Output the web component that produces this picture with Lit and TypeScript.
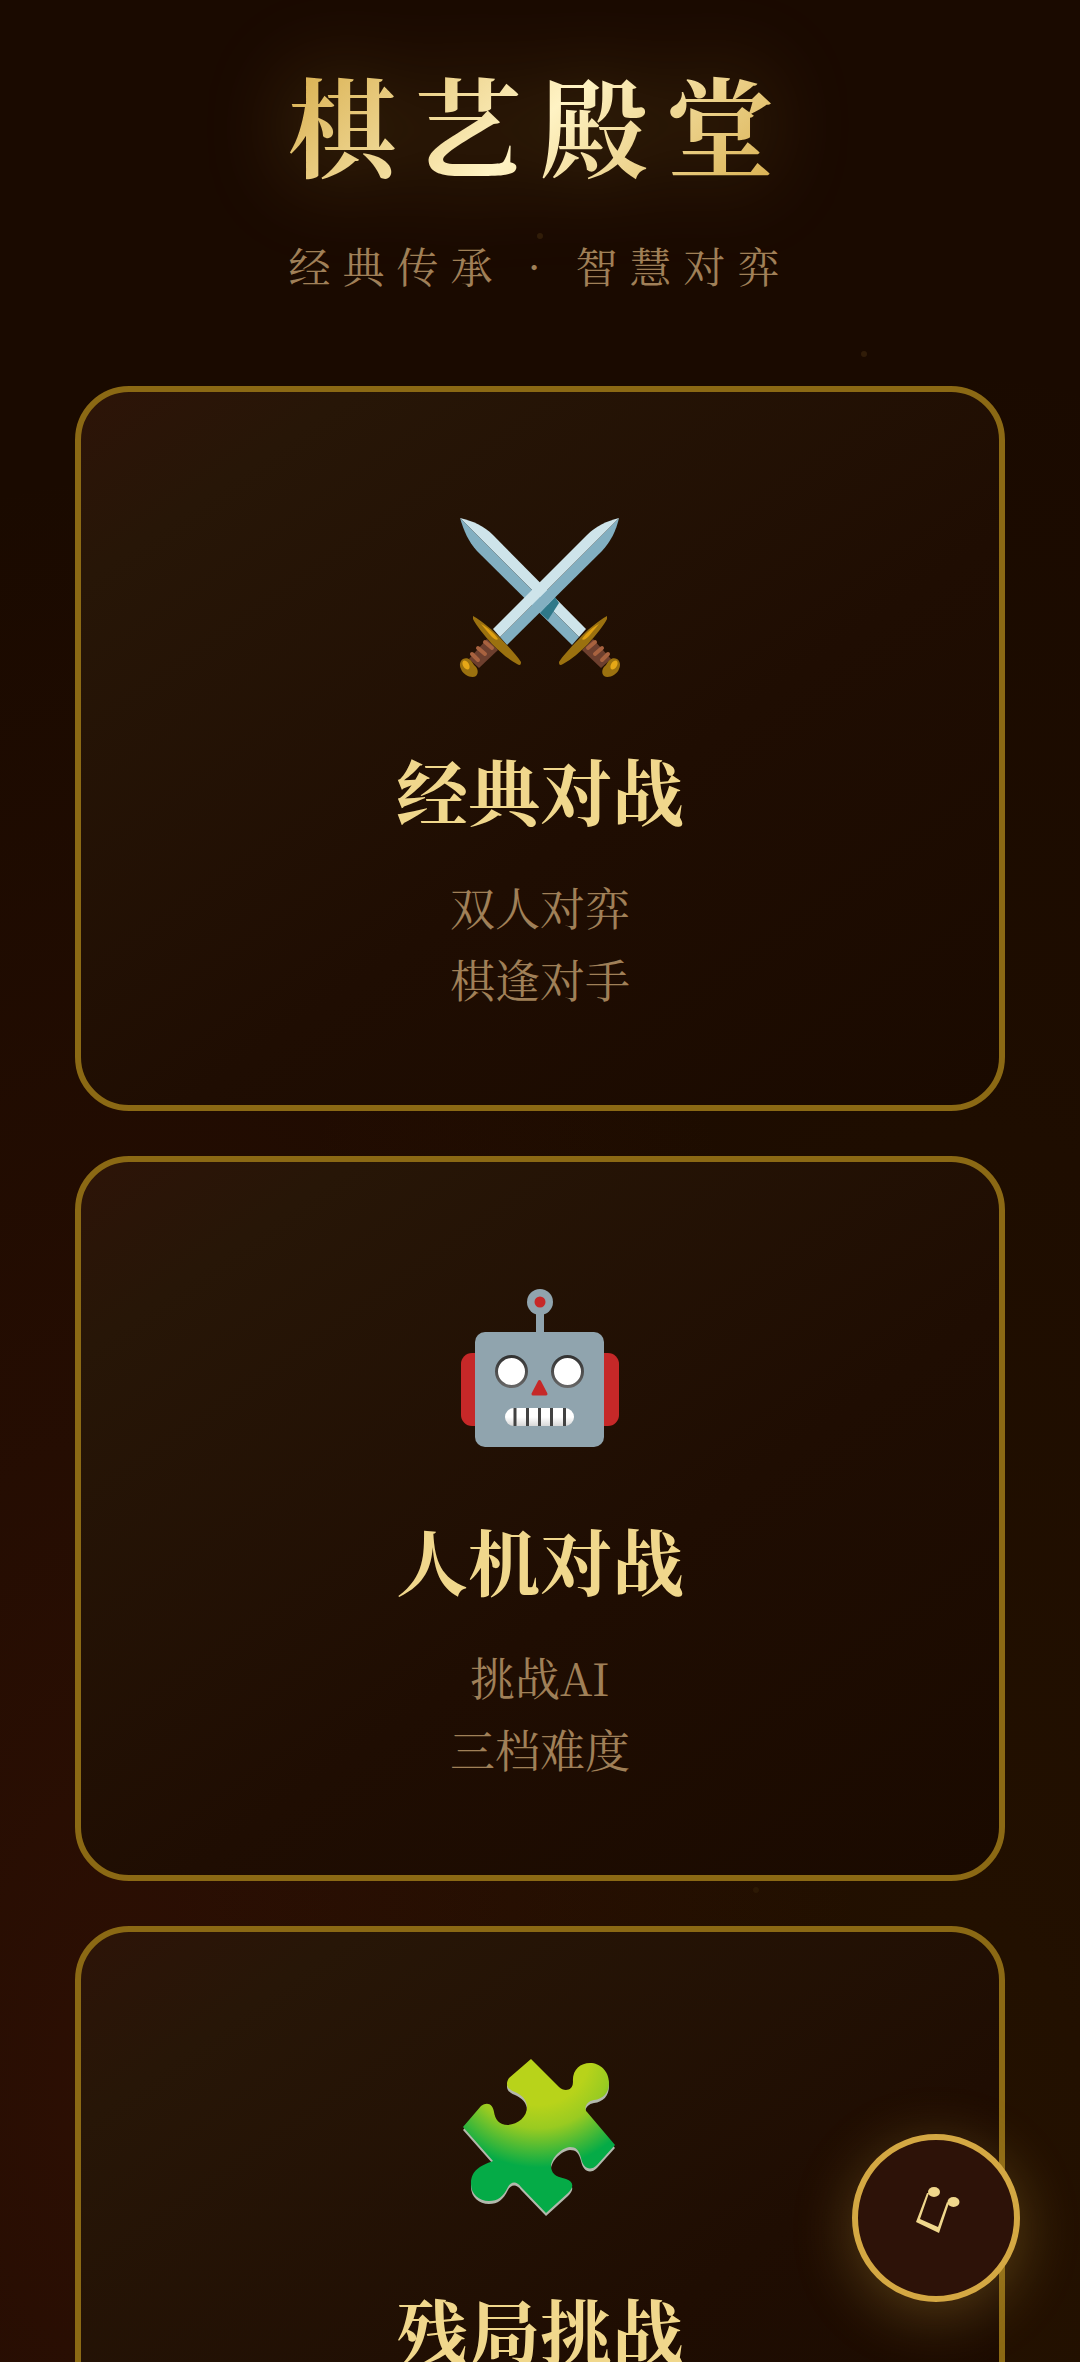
import { LitElement, html, css, svg } from "lit";
import { customElement } from "lit/decorators.js";

const hilt = (flip: boolean) => svg`
  <g transform=${flip ? "translate(160 0) scale(-1 1)" : "translate(0 0)"}>
    <path fill="#6d3f2e" d="M27 121 L38 132 L19 150 L9 141 Z"/>
    <path d="M25 124 l7 6 M18 130 l7 6 M12 136 l6 6" stroke="#a8623f" stroke-width="4" stroke-linecap="round"/>
    <path fill="#9b710f" d="M13 98 C22 103 33 112 42 122 C50 130 58 139 61 144 C61 147 60 148 57 146 C48 141 40 134 32 126 C24 117 16 107 13 101 Z"/>
    <path fill="#e0a010" d="M21 106 C27 109 34 115 38 121 C37 123 34 121 31 118 Z"/>
    <path fill="#9b710f" d="M3 141 C8 139 11 142 14 147 C18 150 19 155 16 158 C12 161 3 157 1 151 C-1 147 0 143 3 141 Z"/>
    <ellipse cx="6" cy="147" rx="3" ry="5" transform="rotate(-30 6 147)" fill="#e6a817"/>
  </g>`;

const swordsIcon = html`
  <svg class="icon" viewBox="0 0 160 160" aria-hidden="true">
    <path fill="#cee4ea" d="M0 0 C13 3 24 8 33 17 L126 111 L119 119 Z"/>
    <path fill="#82afc1" d="M0 0 C4 13 8 23 17 33 L112 127 L119 119 Z"/>
    <path fill="#2f7889" d="M80 95 L95 79 L99 85 L88 102 Z"/>
    <path fill="#82afc1" d="M159 0 C156 13 151 23 142 33 L47 127 L40 119 Z"/>
    <path fill="#cee4ea" d="M159 0 C147 3 136 8 127 17 L33 111 L40 119 Z"/>
    ${hilt(false)}${hilt(true)}
  </svg>`;

const robotIcon = html`
  <svg class="icon" viewBox="0 0 160 160" aria-hidden="true">
    <defs>
      <linearGradient id="teeth" x1="0" y1="0" x2="0" y2="1">
        <stop offset=".5" stop-color="#fff"/><stop offset="1" stop-color="#d8d8d8"/>
      </linearGradient>
      <linearGradient id="rim" x1="0" y1="0" x2="0" y2="1">
        <stop offset="0" stop-color="#333"/><stop offset="1" stop-color="#666"/>
      </linearGradient>
    </defs>
    <rect x="1" y="65" width="158" height="73" rx="11" fill="#c62828"/>
    <rect x="15" y="44" width="129" height="115" rx="10" fill="#90a4ae"/>
    <path d="M76 20h8v26h-8z" fill="#90a4ae"/>
    <circle cx="80" cy="14" r="13" fill="#90a4ae"/>
    <circle cx="80" cy="14" r="5.500" fill="#c62828"/>
    <circle cx="51.500" cy="83.500" r="15" fill="#fff" stroke="url(#rim)" stroke-width="3"/>
    <circle cx="107.500" cy="83.500" r="15" fill="#fff" stroke="url(#rim)" stroke-width="3"/>
    <path d="M79.500 93.500 L86 106 H73Z" fill="#c62828" stroke="#c62828" stroke-width="3" stroke-linejoin="round"/>
    <rect x="45" y="120" width="69" height="18" rx="9" fill="url(#teeth)"/>
    <path d="M55 120v18M67.500 120v18M79.500 120v18M91.500 120v18M104.500 120v18" stroke="#424242" stroke-width="3"/>
  </svg>`;

const piece =
  "M71 1 L99 29 C104 34 113 33 113 24 C112 12 120 5 130 5 C140 5 149 13 149 25 C149 35 143 41 134 42 C127 43 123 50 127 54 L155 87 L137 107 C130 114 123 110 121 100 C119 92 116 89 110 89 C101 90 91 100 91 109 C92 118 99 119 106 121 C114 124 114 129 108 135 L86 155 L61 129 C57 123 51 123 48 129 C43 139 38 143 29 143 C19 143 11 136 11 126 C11 112 20 108 33 103 L3 69 L21 48 C28 43 33 47 34 54 C35 61 39 67 48 67 C58 66 67 59 67 49 C67 42 62 37 55 34 C47 31 45 26 49 20 Z";

const puzzleIcon = html`
  <svg class="icon" viewBox="0 0 160 160" aria-hidden="true">
    <defs>
      <radialGradient id="green" gradientUnits="userSpaceOnUse" cx="78" cy="-5" r="130">
        <stop offset=".4" stop-color="#b8d31a"/>
        <stop offset=".58" stop-color="#99cb21"/>
        <stop offset=".88" stop-color="#05ab47"/>
      </radialGradient>
    </defs>
    <path d=${piece} fill="#b3b8ac" transform="translate(0 3)"/>
    <path d=${piece} fill="url(#green)"/>
  </svg>`;

const modes = [
  { icon: swordsIcon, title: "经典对战", lines: ["双人对弈", "棋逢对手"] },
  { icon: robotIcon, title: "人机对战", lines: ["挑战AI", "三档难度"] },
  { icon: puzzleIcon, title: "残局挑战", lines: [] },
];

@customElement("app-root")
export class AppRoot extends LitElement {
  static styles = css`
    :host {
      display: block;
      position: relative;
      height: 100vh;
      overflow: hidden;
      font-family: "Noto Serif CJK SC", "Noto Serif SC", "Source Han Serif SC", "Liberation Serif", "Noto Sans CJK SC", serif;
      color: #a08058;
      background:
        radial-gradient(ellipse at 10% 88%, rgba(139, 40, 20, 0.16), transparent 55%),
        radial-gradient(ellipse at 90% 95%, rgba(120, 80, 0, 0.1), transparent 60%),
        #1a0a00;
    }
    .page {
      height: 100%;
      box-sizing: border-box;
      overflow-y: auto;
      scrollbar-width: none;
      padding: 45px 75px;
    }
    .header {
      text-align: center;
      margin-bottom: 90px;
    }
    .title {
      margin: 0 auto 33px;
      width: fit-content;
      font-size: 108px;
      line-height: 156px;
      font-weight: 700;
      letter-spacing: 18px;
      background: linear-gradient(135deg, #d4a843, #fff3c4 50%, #d4a843);
      background-clip: text;
      -webkit-background-clip: text;
      color: transparent;
      filter: drop-shadow(0 0 45px rgba(212, 168, 67, 0.35));
    }
    .subtitle {
      margin: 0;
      font-size: 42px;
      line-height: 62px;
      letter-spacing: 12px;
    }
    .modes {
      display: flex;
      flex-direction: column;
      gap: 45px;
    }
    .card {
      font: inherit;
      color: inherit;
      box-sizing: border-box;
      width: 100%;
      min-height: 725px;
      padding: 90px 45px;
      display: flex;
      flex-direction: column;
      align-items: center;
      border: 6px solid #8b6914;
      border-radius: 54px;
      background: linear-gradient(145deg, #2d1408, #271607 14%, #1f0d02 58%, #1a0a00);
    }
    .icon {
      width: 160px;
      height: 160px;
      margin: 36px 0 59px;
      overflow: visible;
    }
    .name {
      font-size: 72px;
      line-height: 104px;
      font-weight: 700;
      color: #f0d78c;
      margin-bottom: 30px;
    }
    .line {
      font-size: 45px;
      line-height: 72px;
    }
    .music {
      position: absolute;
      right: 60px;
      bottom: 60px;
      width: 168px;
      height: 168px;
      padding: 0;
      display: grid;
      place-items: center;
      border: 6px solid #d4a843;
      border-radius: 50%;
      background: #2d1208;
      box-shadow: 0 12px 60px rgba(212, 168, 67, 0.3);
    }
    .note {
      width: 60px;
      height: 60px;
      overflow: visible;
    }
    .mote {
      position: absolute;
      width: 6px;
      height: 6px;
      border-radius: 50%;
      background: #d4a843;
      opacity: 0.12;
      transform: translate(-50%, -50%);
    }
    .mote.a { left: 50%; top: 10%; }
    .mote.b { left: 80%; top: 15%; }
    .mote.c { left: 70%; top: 80%; opacity: 0.06; }
  `;

  render() {
    return html`
      <main class="page">
        <header class="header">
          <h1 class="title">棋艺殿堂</h1>
          <p class="subtitle">经典传承 · 智慧对弈</p>
        </header>
        <nav class="modes">
          ${modes.map(
            (m) => html`<button class="card" type="button">
              ${m.icon}
              <span class="name">${m.title}</span>
              ${m.lines.map((l) => html`<span class="line">${l}</span>`)}
            </button>`
          )}
        </nav>
      </main>
      <i class="mote a"></i><i class="mote b"></i><i class="mote c"></i>
      <button class="music" type="button" aria-label="音乐">
        <svg class="note" viewBox="0 0 60 60" aria-hidden="true">
          <g fill="#f0d78c">
            <ellipse cx="28" cy="4" rx="6" ry="5"/>
            <ellipse cx="47.500" cy="14" rx="6" ry="5"/>
            <path d="M21 5 L23 5 L14 31 L32 39 L41 14 L43 15 L33 45 L10 34 Z"/>
          </g>
        </svg>
      </button>
    `;
  }
}
